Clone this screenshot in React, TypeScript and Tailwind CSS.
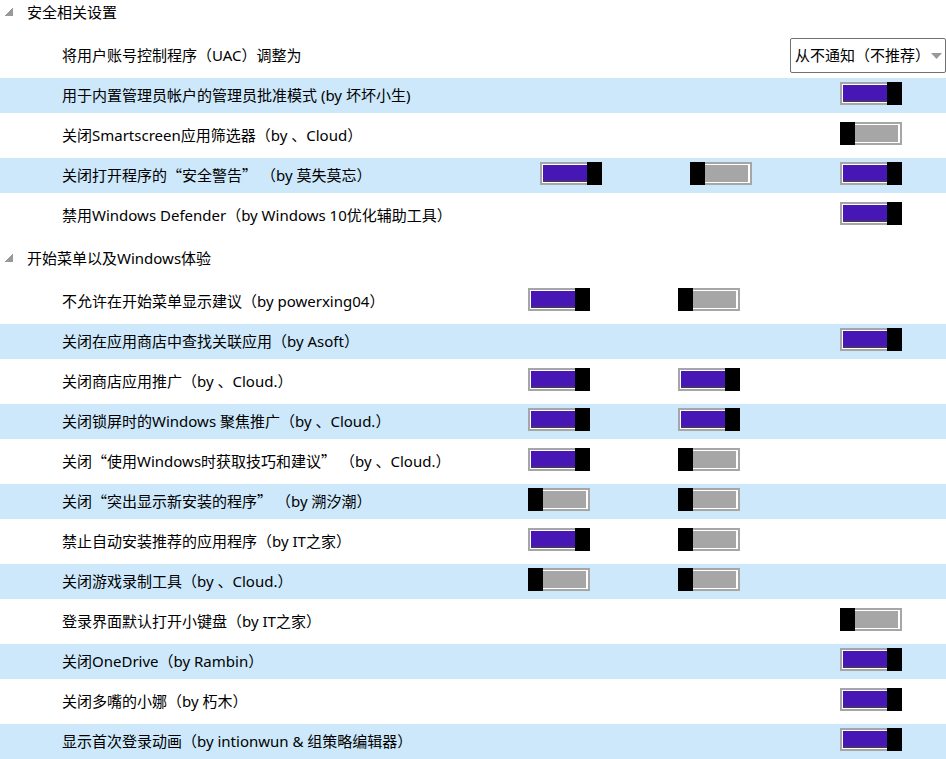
import { useState } from "react";

type Toggle = boolean | null;

interface Row {
  title: string;
  toggles?: [Toggle, Toggle, Toggle];
  options?: string[];
}

interface Section {
  title: string;
  columns: string;
  rows: Row[];
}

const WIDE = "grid-cols-[minmax(0,1fr)_62px_88px_62px_88px_62px]";
const NARROW = "grid-cols-[minmax(0,1fr)_62px_88px_62px_100px_62px]";

const sections: Section[] = [
  {
    title: "安全相关设置",
    columns: WIDE,
    rows: [
      {
        title: "将用户账号控制程序（UAC）调整为",
        options: ["从不通知（不推荐）", "始终通知", "仅在应用更改时通知"],
      },
      { title: "用于内置管理员帐户的管理员批准模式 (by 坏坏小生)", toggles: [null, null, true] },
      { title: "关闭Smartscreen应用筛选器（by 、Cloud）", toggles: [null, null, false] },
      { title: "关闭打开程序的“安全警告” （by 莫失莫忘）", toggles: [true, false, true] },
      { title: "禁用Windows Defender（by Windows 10优化辅助工具）", toggles: [null, null, true] },
    ],
  },
  {
    title: "开始菜单以及Windows体验",
    columns: NARROW,
    rows: [
      { title: "不允许在开始菜单显示建议（by powerxing04）", toggles: [true, false, null] },
      { title: "关闭在应用商店中查找关联应用（by Asoft）", toggles: [null, null, true] },
      { title: "关闭商店应用推广（by 、Cloud.）", toggles: [true, true, null] },
      { title: "关闭锁屏时的Windows 聚焦推广（by 、Cloud.）", toggles: [true, true, null] },
      { title: "关闭“使用Windows时获取技巧和建议” （by 、Cloud.）", toggles: [true, false, null] },
      { title: "关闭“突出显示新安装的程序” （by 溯汐潮）", toggles: [false, false, null] },
      { title: "禁止自动安装推荐的应用程序（by IT之家）", toggles: [true, false, null] },
      { title: "关闭游戏录制工具（by 、Cloud.）", toggles: [false, false, null] },
      { title: "登录界面默认打开小键盘（by IT之家）", toggles: [null, null, false] },
      { title: "关闭OneDrive（by Rambin）", toggles: [null, null, true] },
      { title: "关闭多嘴的小娜（by 朽木）", toggles: [null, null, true] },
      { title: "显示首次登录动画（by intionwun & 组策略编辑器）", toggles: [null, null, true] },
    ],
  },
];

const columnStarts = ["col-start-2", "col-start-4", "col-start-6"];

// Curly quotes take the full-width CJK glyphs.
function Title({ text }: { text: string }) {
  return (
    <>
      {text.split(/([“”])/).map((part, i) =>
        part === "“" || part === "”" ? (
          <span key={i} className="font-['Noto_Sans_CJK_SC',sans-serif] leading-none">
            {part}
          </span>
        ) : (
          part
        ),
      )}
    </>
  );
}

function Switch({ id, label, initial, column }: { id: string; label: string; initial: boolean; column: string }) {
  return (
    <input
      id={id}
      type="checkbox"
      role="switch"
      aria-label={label}
      defaultChecked={initial}
      className={`${column} relative mt-1 h-[23px] w-[62px] appearance-none self-start border-2 border-[#a6a6a6] bg-[#a6a6a6] bg-clip-content p-px pr-0.5 shadow-[inset_0_0_0_1px_#fff,inset_-2px_0_0_0_#fff] before:absolute before:-inset-y-0.5 before:-left-0.5 before:w-[15px] before:bg-black checked:bg-[#4617b4] checked:bg-[linear-gradient(to_top,#4b2f73_2px,transparent_2px)] checked:bg-origin-content checked:before:-right-0.5 checked:before:left-auto`}
    />
  );
}

function OptionSelect({ id, options }: { id: string; options: string[] }) {
  return (
    <div className="relative col-span-2 col-start-5 -mr-11 w-[156px] justify-self-end">
      <select
        id={id}
        className="h-[35px] w-full appearance-none rounded-[2px] border border-[#707070] bg-white pr-5 pl-1 text-[15px] leading-[25px] text-black"
      >
        {options.map((option) => (
          <option key={option}>{option}</option>
        ))}
      </select>
      <svg
        className="pointer-events-none absolute top-[15px] right-1 h-1.5 w-[11px]"
        viewBox="0 0 11 6"
        fill="#999"
        aria-hidden="true"
      >
        <path d="M0 0h11L5.5 6z" />
      </svg>
    </div>
  );
}

function SettingsRow({ row, id, columns }: { row: Row; id: string; columns: string }) {
  return (
    <li className={`grid h-[35px] items-center pr-11 pl-[62px] even:bg-[#cce8fa] ${columns}`}>
      <label
        htmlFor={`${id}-${row.toggles ? row.toggles.findIndex((t) => t !== null) : 0}`}
        className="col-start-1 row-start-1 whitespace-nowrap"
      >
        <Title text={row.title} />
      </label>
      {row.options && <OptionSelect id={`${id}-0`} options={row.options} />}
      {row.toggles?.map(
        (value, i) =>
          value !== null && (
            <Switch key={i} id={`${id}-${i}`} label={row.title} initial={value} column={columnStarts[i]} />
          ),
      )}
    </li>
  );
}

function SettingsSection({ section, id }: { section: Section; id: string }) {
  const [open, setOpen] = useState(true);
  return (
    <section className="flex flex-col gap-[13px]">
      <h2>
        <button
          type="button"
          aria-expanded={open}
          onClick={() => setOpen(!open)}
          className="flex h-[25px] items-center gap-[14px] pl-[5px]"
        >
          <svg
            className="mb-0.5 size-2"
            viewBox="0 0 8 8"
            fill="#999"
            shapeRendering="crispEdges"
            aria-hidden="true"
          >
            <path d="M8 0v8H0V7h1V6h1V5h1V4h1V3h1V2h1V1h1V0z" />
          </svg>
          {section.title}
        </button>
      </h2>
      {open && (
        <ul className="flex flex-col gap-[5px]">
          {section.rows.map((row, i) => (
            <SettingsRow key={row.title} row={row} id={`${id}-${i}`} columns={section.columns} />
          ))}
        </ul>
      )}
    </section>
  );
}

export default function App() {
  return (
    <main
      lang="zh-CN"
      className="flex min-h-screen flex-col gap-[13px] overflow-x-hidden bg-white font-['Noto_Sans','Noto_Sans_CJK_SC',sans-serif] text-[15px] leading-[25px] text-black"
    >
      {sections.map((section, i) => (
        <SettingsSection key={section.title} section={section} id={`setting-${i}`} />
      ))}
    </main>
  );
}
